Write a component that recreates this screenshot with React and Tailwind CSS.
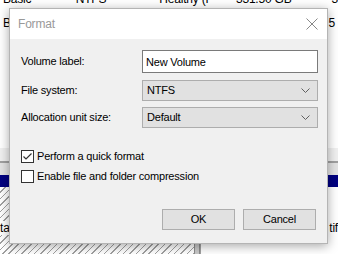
import { useState } from "react";

function Chevron() {
  return (
    <svg width="9" height="6" viewBox="0 0 9 6" className="shrink-0">
      <path d="M0.5 0.5 L4.5 4.5 L8.5 0.5" fill="none" stroke="#606060" strokeWidth="1" />
    </svg>
  );
}

function Select({ value }) {
  return (
    <div className="w-[176px] h-[21px] bg-[#e1e1e1] border border-[#adadad] flex items-center justify-between pl-[4px] pr-[7px]">
      <span>{value}</span>
      <Chevron />
    </div>
  );
}

function Checkbox({ checked, label }) {
  return (
    <div className="flex items-center gap-[3px] h-[13px]">
      <div className="w-[13px] h-[13px] bg-white border border-[#333] flex items-center justify-center">
        {checked && (
          <svg width="11" height="11" viewBox="0 0 11 11">
            <path d="M1.5 5.5 L4 8 L9.5 2.5" fill="none" stroke="#333" strokeWidth="1.2" />
          </svg>
        )}
      </div>
      <span>{label}</span>
    </div>
  );
}

export default function App() {
  const [label, setLabel] = useState("New Volume");

  return (
    <div className="relative w-[338px] h-[254px] overflow-hidden bg-white text-[11px] tracking-[-0.2px] leading-none text-black font-['Segoe_UI','Liberation_Sans',sans-serif]">
      {/* disk management behind the dialog */}
      <div className="flex flex-col h-full">
        <div className="flex h-[10px] shrink-0 items-end pl-[3px] -mt-[4px] leading-[14px] text-[12px]">
          <span className="w-[73px]">Basic</span>
          <span className="w-[84px]">NTFS</span>
          <span className="w-[77px]">Healthy (P</span>
          <span className="w-[96px]">331.50 GB</span>
          <span>3</span>
        </div>
        <div className="flex shrink-0 justify-between h-[14px] mt-[10px] px-[3px] leading-[14px] text-[12px]">
          <span>B</span>
          <span>5</span>
        </div>
        <div className="h-[118px] shrink-0" />
        <div className="h-[13px] shrink-0 bg-[#f0f0f0]" />
        <div className="h-[2px] shrink-0 bg-[#a0a0a0]" />
        <div className="h-[12px] shrink-0 bg-[#e3e3e3]" />
        <div className="h-[12px] shrink-0 bg-[#000080]" />
        <div className="flex-1 flex text-[12px]">
          <div className="w-[194px] bg-[repeating-linear-gradient(135deg,#fff_0px,#fff_3.5px,#a0a0a0_3.5px,#a0a0a0_4.5px)] pt-[35px]">
            <span className="bg-white">ta</span>
          </div>
          <div className="w-[6px] bg-[#c8c8c8] border-x border-[#8c8c8c]" />
          <div className="flex-1 border-l border-[#a0a0a0] flex justify-end pt-[35px]">
            <span>tif</span>
          </div>
        </div>
      </div>

      {/* Format dialog */}
      <div className="absolute left-[9px] top-[8px] w-[319px] h-[236px] border border-[#b4b4b4] bg-[#f0f0f0] shadow-[0_2px_10px_rgba(0,0,0,0.35)] flex flex-col">
        <div className="h-[30px] bg-white flex items-center justify-between pl-[8px] pr-[9px]">
          <span className="text-[#999] text-[12px]">Format</span>
          <svg width="12" height="12" viewBox="0 0 12 12">
            <path d="M0.5 0.5 L11.5 11.5 M11.5 0.5 L0.5 11.5" stroke="#888" strokeWidth="1" />
          </svg>
        </div>

        <div className="flex flex-col pl-[11px] pr-[9px] pt-[11px]">
          <div className="flex items-center justify-between h-[23px]">
            <span>Volume label:</span>
            <input
              value={label}
              onChange={(e) => setLabel(e.target.value)}
              className="w-[176px] h-[23px] bg-white border border-[#7a7a7a] px-[3px] outline-none text-[11px] tracking-[-0.2px]"
            />
          </div>
          <div className="flex items-center justify-between mt-[7px]">
            <span>File system:</span>
            <Select value="NTFS" />
          </div>
          <div className="flex items-center justify-between mt-[6px]">
            <span>Allocation unit size:</span>
            <Select value="Default" />
          </div>

          <div className="flex flex-col gap-[7px] mt-[22px]">
            <Checkbox checked label="Perform a quick format" />
            <Checkbox label="Enable file and folder compression" />
          </div>

          <div className="flex justify-end gap-[8px] mt-[26px] pr-[2px]">
            <button className="w-[73px] h-[21px] bg-[#e1e1e1] border border-[#adadad]">OK</button>
            <button className="w-[73px] h-[21px] bg-[#e1e1e1] border border-[#adadad]">Cancel</button>
          </div>
        </div>
      </div>
    </div>
  );
}
